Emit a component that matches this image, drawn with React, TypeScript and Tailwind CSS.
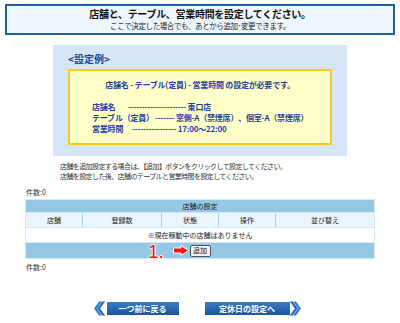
import React from "react";

const jp = { fontFamily: '"Noto Sans CJK JP", "Noto Sans", sans-serif' };

const Chevron = ({ dir }: { dir: "left" | "right" }) => (
  <svg width="12" height="15" viewBox="0 0 12 15" className={dir === "right" ? "" : "-scale-x-100"}>
    <path d="M1 0.5 L6 7.5 L1 14.5 L4 14.5 L9 7.5 L4 0.5 Z" fill="#1d5ea8" stroke="#7fb1e3" strokeWidth="0.8" />
    <path d="M4 0.5 L9 7.5 L4 14.5 L7 14.5 L12 7.5 L7 0.5 Z" fill="#2c6fbd" stroke="#a9cdf0" strokeWidth="0.8" />
  </svg>
);

const App = () => {
  const cols = [
    { label: "店舗", w: "w-[56px]" },
    { label: "登録数", w: "w-[78px]" },
    { label: "状態", w: "w-[56px]" },
    { label: "操作", w: "w-[56px]" },
    { label: "並び替え", w: "" },
  ];

  return (
    <div className="w-[400px] h-[323px] bg-white text-[#333]" style={jp}>
      <div className="pt-[4px] px-[5px]">
        <div className="h-[31px] border-2 border-[#1f5f97] bg-[#eef6fd] flex flex-col items-center justify-center leading-none">
          <div className="text-[10px] font-bold text-[#111] tracking-[-0.3px]">店舗と、テーブル、営業時間を設定してください。</div>
          <div className="text-[7.5px] text-[#222] mt-[3px] tracking-[-0.4px]">ここで決定した場合でも、あとから追加･変更できます。</div>
        </div>
      </div>

      <div className="mx-[53px] mt-[10px] h-[111px] bg-[#d6e6f7] pt-[9px] px-[15px]">
        <div className="text-[10px] font-bold text-[#1a49a0] leading-none">&lt;設定例&gt;</div>
        <div className="mt-[5px] h-[76px] border-2 border-[#ffc62a] bg-[#ffffc9] text-[#1f3f9f] font-bold text-[8px] leading-none">
          <div className="text-center mt-[10px] tracking-[-0.2px]">店舗名 - テーブル(定員) - 営業時間 の設定が必要です。</div>
          <div className="mt-[14px] pl-[22px] flex flex-col gap-[3px] tracking-[-0.2px]">
            <div className="flex"><span className="w-[36px]">店舗名</span><span>--------------------- 東口店</span></div>
            <div className="flex"><span className="w-[63px]">テーブル（定員）</span><span>------- 窓側-A（禁煙席）、個室-A（禁煙席）</span></div>
            <div className="flex"><span className="w-[40px]">営業時間</span><span>---------------- 17:00～22:00</span></div>
          </div>
        </div>
      </div>

      <div className="mt-[5px] pl-[60px] text-[7px] tracking-[-0.6px] leading-[10px] text-[#333]">
        <div>店舗を追加設定する場合は、【追加】ボタンをクリックして設定してください。</div>
        <div>店舗を設定した後、店舗のテーブルと営業時間を設定してください。</div>
      </div>

      <div className="mt-[7px] pl-[26px] text-[7px] leading-[8px]">件数:0</div>

      <div className="mt-[3px] ml-[25px] w-[350px] bg-[#d3e8f4] p-[1px]">
        <div className="h-[12px] bg-[#94c8e4] flex items-center justify-center text-[7px] leading-none text-[#222]">店舗の設定</div>
        <div className="flex gap-[1px] mt-[1px] bg-[#a9d2ea]">
          {cols.map((c) => (
            <div key={c.label} className={`${c.w || "flex-1"} h-[14px] bg-[#eaf5fd] flex items-center justify-center text-[7px] leading-none text-[#222]`}>
              {c.label}
            </div>
          ))}
        </div>
        <div className="mt-[1px] h-[14px] bg-white flex items-center justify-center text-[7px] leading-none text-[#222]">※現在稼動中の店舗はありません</div>
        <div className="relative mt-[1px] h-[15px] bg-[#94c8e4] flex items-center justify-center">
          <div className="absolute left-[122px] top-0 h-[15px] flex items-center">
            <span
              className="text-[19px] text-[#f01010] leading-none mt-[2px]"
              style={{ fontFamily: '"Liberation Sans", sans-serif', textShadow: "1px 0 #fff, -1px 0 #fff, 0 1px #fff, 0 -1px #fff" }}
            >
              1.
            </span>
            <svg width="16" height="11" viewBox="0 0 16 11" className="ml-[9px]">
              <path d="M0.5 3 H8 V0.5 L15.5 5.5 L8 10.5 V8 H0.5 Z" fill="#f01818" stroke="#fff" strokeWidth="1" />
            </svg>
          </div>
          <button className="h-[12px] w-[21px] border border-[#555] rounded-[2px] bg-[#f2f2f2] text-[7px] leading-none text-[#111] flex items-center justify-center">追加</button>
        </div>
      </div>

      <div className="mt-[4px] pl-[26px] text-[7px] leading-[8px]">件数:0</div>

      <div className="mt-[30px] flex justify-center gap-[26px] pr-[6px]">
        <div className="flex items-center">
          <Chevron dir="left" />
          <div className="w-[72px] h-[13px] bg-gradient-to-b from-[#3a7cc6] to-[#1c569f] text-white text-[8px] leading-none font-bold flex items-center justify-center ml-[1px]">
            一つ前に戻る
          </div>
        </div>
        <div className="flex items-center">
          <div className="w-[85px] h-[13px] bg-gradient-to-b from-[#3a7cc6] to-[#1c569f] text-white text-[8px] leading-none font-bold flex items-center justify-center mr-[-1px]">
            定休日の設定へ
          </div>
          <Chevron dir="right" />
        </div>
      </div>
    </div>
  );
};

export default App;
